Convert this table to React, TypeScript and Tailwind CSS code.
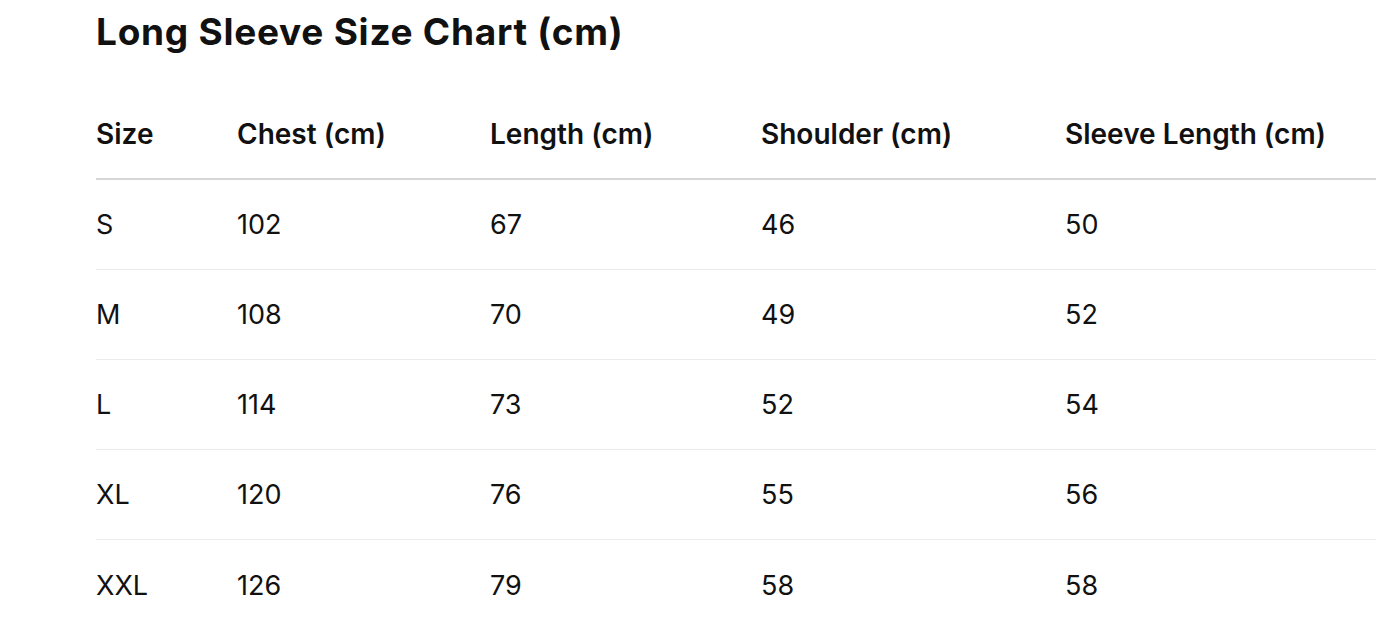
const headers = ["Size", "Chest (cm)", "Length (cm)", "Shoulder (cm)", "Sleeve Length (cm)"];

const rows = [
  ["S", "102", "67", "46", "50"],
  ["M", "108", "70", "49", "52"],
  ["L", "114", "73", "52", "54"],
  ["XL", "120", "76", "55", "56"],
  ["XXL", "126", "79", "58", "58"],
];

const App = () => {
  return (
    <div
      className="min-h-screen bg-white pl-[96px] pr-[12px] text-[#111]"
      style={{ fontFamily: "Inter, 'Noto Sans', sans-serif" }}
    >
      <h1 className="pt-[10px] text-[37px] font-bold leading-[44px] tracking-[0.02em] text-[#111]">
        Long Sleeve Size Chart (cm)
      </h1>
      <div className="mt-[35px]">
        <div className="grid h-[91px] grid-cols-[141px_253px_271px_304px_1fr] items-center border-b-2 border-[#d6d6d6] text-[28px] font-semibold">
          {headers.map((h) => (
            <div key={h}>{h}</div>
          ))}
        </div>
        {rows.map((r) => (
          <div
            key={r[0]}
            className="grid h-[90px] grid-cols-[141px_253px_271px_304px_1fr] items-center border-b border-[#ececec] pt-[2px] text-[27px] last:border-b-0"
          >
            {r.map((c, i) => (
              <div key={i}>{c}</div>
            ))}
          </div>
        ))}
      </div>
    </div>
  );
};

export default App;
